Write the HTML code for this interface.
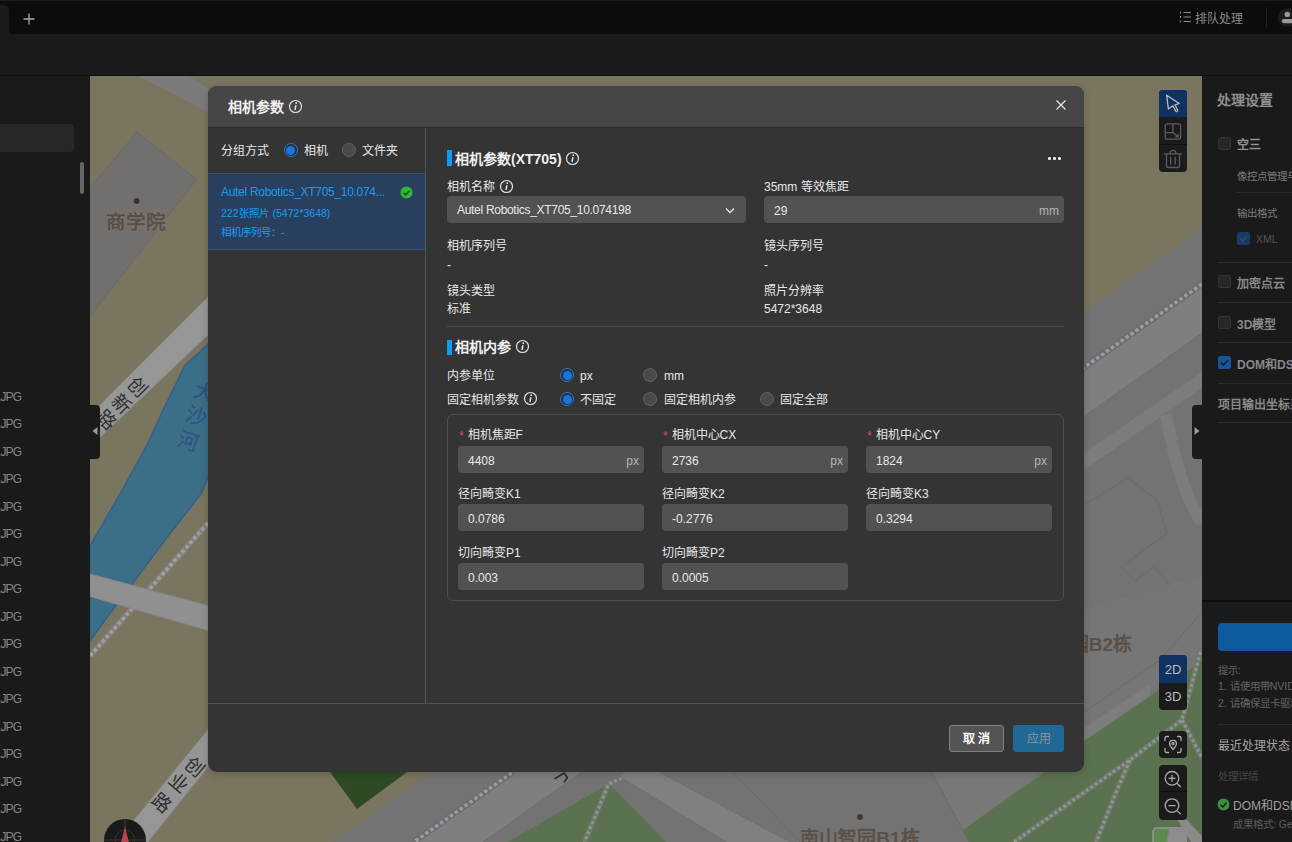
<!DOCTYPE html>
<html lang="zh-CN">
<head>
<meta charset="utf-8">
<title>相机参数</title>
<style>
*{box-sizing:border-box;margin:0;padding:0}
html,body{width:1292px;height:842px;overflow:hidden;background:#1a1a1a}
body{font-family:"Liberation Sans",sans-serif;font-size:12px;color:#e6e6e6;position:relative}
.abs{position:absolute}
.t{position:absolute;white-space:nowrap;line-height:16px;height:16px}
/* top bars */
#topbar{left:0;top:0;width:1292px;height:34px;background:#0c0c0c;border-top:1px solid #1d1d1d}
#tab{left:0;top:5px;width:9px;height:29px;background:#1a1a1a;border-radius:0 5px 0 0}
#bar2{left:0;top:34px;width:1292px;height:42px;background:#1a1a1a;border-bottom:1px solid #0e0e0e}
/* side panels */
#left{left:0;top:76px;width:90px;height:766px;background:#1a1a1a}
#right{left:1202px;top:76px;width:90px;height:766px;background:#1a1a1a}
#map{left:90px;top:76px;width:1112px;height:766px;background:#7a755f;overflow:hidden}
.jpg{left:-2px;color:#858585;font-size:12px;letter-spacing:-0.9px}
.handle{background:#1a1a1a;width:10px;height:54px;top:405px}
/* map tools */
.tool{left:1159px;width:28px;background:#1b1b1b}
.rdiv{position:absolute;height:1px;background:#2b2b2b;right:0}
.cb{position:absolute;width:13px;height:13px;border-radius:2px;background:#272727;border:1px solid #333}
.rl{color:#888;font-weight:bold}
</style>
</head>
<body>
<div id="topbar" class="abs"></div>
<div id="tab" class="abs"></div>
<div id="bar2" class="abs"></div>
<svg class="abs" style="left:22px;top:12px" width="14" height="14" viewBox="0 0 14 14"><path d="M7 1.5v11M1.5 7h11" stroke="#a8a8a8" stroke-width="1.3" fill="none"/></svg>
<!-- queue -->
<svg class="abs" style="left:1179px;top:10px" width="14" height="14" viewBox="0 0 14 14"><path d="M4.5 2.500h7.500M4.500 7h7.500M4.500 11.500h7.500" stroke="#8d8d8d" stroke-width="1.100"/><path d="M1.500 1.500v2M1.500 6v2M1.500 10.500v2" stroke="#8d8d8d" stroke-width="1"/></svg>
<div class="t" style="left:1195px;top:11px;color:#8d8d8d;font-size:12px">排队处理</div>
<div class="abs" style="left:1266px;top:7px;width:1px;height:20px;background:#202020"></div>
<div class="abs" style="left:1278px;top:8px;width:19px;height:19px;border-radius:50%;background:#1c1c1c"></div>
<svg class="abs" style="left:1281px;top:10px" width="14" height="14" viewBox="0 0 14 14"><circle cx="6.3" cy="4.4" r="2.7" fill="#9a9a9a"/><rect x="0.7" y="9" width="11.2" height="4.2" rx="2.1" fill="#9a9a9a"/></svg>

<div id="map" class="abs">
<svg width="1112" height="766" viewBox="90 76 1112 766" style="position:absolute;left:0;top:0">

  <rect x="90" y="76" width="1112" height="766" fill="#7a755f"/>
  <!-- big gray area -->
  <polygon points="1202,229 332,842 1202,842" fill="#737373"/>
  <!-- lighter road band with dotted rail -->
  <polygon points="1202,284 414,842 483,842 1202,333" fill="#7f7f7f"/>
  <line x1="1202" y1="333" x2="483" y2="842" stroke="#6e6e78" stroke-width="1"/>
  <line x1="1202" y1="284" x2="414" y2="842" stroke="#6c6c74" stroke-width="6"/>
  <line x1="1202" y1="284" x2="414" y2="842" stroke="#9c9c9c" stroke-width="3.500" stroke-dasharray="3.500 2.500"/>
  <!-- secondary roads right strip -->
  <polygon points="1202,372 1084,453 1084,470 1202,388" fill="#7c7c7c"/>
  <path d="M1166 414 C1172 450 1185 500 1202 522" stroke="#7c7c7c" stroke-width="12" fill="none"/>
  <path d="M1084 505 L1128 478 L1157 500 L1167 533 L1121 567 L1135 581 L1154 567 L1202 622" stroke="#6a6a6a" stroke-width="1" fill="none"/>
  <!-- lighter gray block near B2 -->
  <polygon points="1084,610 1202,575 1202,661 1084,741" fill="#767676"/>
  <polygon points="1150,684 1084,728 1084,741 1150,696" fill="#7d7d7d"/>
  <path d="M1084 712 L1160 660 L1202 612" stroke="#6c6c6c" stroke-width="1" fill="none"/>
  <!-- green bottom right -->
  <polygon points="932,772 1084,741 963,830" fill="#787876"/>
  <polygon points="1202,661 1084,741 1044,773 963,830 968.500,842 1202,842" fill="#5b7250"/>
  <!-- green triangle bottom middle -->
  <polygon points="609,783.500 508,842 666,842" fill="#5b7250"/>
  <path d="M622 778 L608.500 784 L584.500 842" stroke="#6b7769" stroke-width="5.500" fill="none"/>
  <path d="M622 778 L608.500 784 L584.500 842" stroke="#8f948e" stroke-width="3.200" stroke-dasharray="3 2.500" fill="none"/>
  <!-- bottom diagonal light road -->
  <polygon points="619,776 626,772 659,772 790,842 726,842" fill="#808080"/>
  <path d="M619 776 L726 842 M659 772 L790 842" stroke="#6e6e78" stroke-width="1" fill="none"/>
  <!-- B1 building outline -->
  <path d="M733 772 L800 842 M932 772 L969 842" stroke="#6a6a6a" stroke-width="1" fill="none"/>
  <!-- dotted paths on green -->
  <path d="M1200.500 652 L1182 720 L1130 760 L1014 842 M1130 760 L1117.500 789 L1096 842 M1182 720 L1202 758" stroke="#6b7769" stroke-width="5.500" fill="none"/>
  <path d="M1200.500 652 L1182 720 L1130 760 L1014 842 M1130 760 L1117.500 789 L1096 842 M1182 720 L1202 758" stroke="#8f948e" stroke-width="3.200" stroke-dasharray="3 2.500" fill="none"/>
  <polygon points="1177,819 1186,819 1202,836 1202,842 1191,842" fill="#8a8a8a"/>
  <path d="M555 778.500 L564.300 773 L567.500 778 L564.300 781.700" stroke="#2c2c2c" stroke-width="1.600" fill="none" stroke-linecap="round" stroke-linejoin="round"/>
  <!-- imagery triangle -->
  <polygon points="330,772 407,772 357,809" fill="#2e4a25"/>
  <!-- top-left road -->
  <polygon points="138,76 189,76 208,88 208,112" fill="#7b7b7b"/>
  <!-- building -->
  <polygon points="137,132 196.500,179.500 91,315 90,315 90,188" fill="#71706f" stroke="#6a6968" stroke-width="1"/>
  <circle cx="136.600" cy="201" r="4" fill="#787674"/>
  <circle cx="136.600" cy="201" r="3" fill="#3e322c"/>
  <text x="136" y="229" font-size="19.500" fill="#5a4e46" stroke="#787674" stroke-width="2" paint-order="stroke" text-anchor="middle" font-weight="bold">商学院</text>
  <!-- river -->
  <polygon points="210,342.500 184.700,365.700 176.400,383 163,410 148,443 120,494 90,546 90,641 115,606.500 131.500,585 165,540 201,494 210,473" fill="#3b6f87" stroke="#33608c" stroke-width="1.500"/>
<text x="0" y="0" font-size="21" fill="#2b5185" text-anchor="middle" dominant-baseline="central" transform="translate(204.7,392) rotate(18)">大</text>
<text x="0" y="0" font-size="21" fill="#2b5185" text-anchor="middle" dominant-baseline="central" transform="translate(196,416.5) rotate(18)">沙</text>
<text x="0" y="0" font-size="21" fill="#2b5185" text-anchor="middle" dominant-baseline="central" transform="translate(188,441.5) rotate(18)">河</text>

  <!-- chuangxin road -->
  <polygon points="208,297 90,415 90,447 208,335" fill="#969696" stroke="#858585" stroke-width="1"/>
<text x="0" y="0" font-size="19" fill="#303030" text-anchor="middle" dominant-baseline="central" transform="translate(137.4,387.3) rotate(45)">创</text>
<text x="0" y="0" font-size="19" fill="#303030" text-anchor="middle" dominant-baseline="central" transform="translate(121.5,404) rotate(45)">新</text>
<text x="0" y="0" font-size="19" fill="#303030" text-anchor="middle" dominant-baseline="central" transform="translate(106.6,420.6) rotate(45)">路</text>

  <!-- rail dotted -->
  <line x1="208" y1="523" x2="90" y2="656" stroke="#807f7c" stroke-width="6"/>
  <line x1="208" y1="523" x2="90" y2="656" stroke="#a0a09e" stroke-width="3.500" stroke-dasharray="3.500 2.500"/>
  <!-- bridge road -->
  <polygon points="90,574 208,605.500 208,630.500 90,596.500" fill="#909090" stroke="#858585" stroke-width="1"/>
  <!-- chuangye road -->
  <polygon points="208,729.500 116,842 148,842 208,767" fill="#969696" stroke="#858585" stroke-width="1"/>
<text x="0" y="0" font-size="19" fill="#303030" text-anchor="middle" dominant-baseline="central" transform="translate(194,767) rotate(40)">创</text>
<text x="0" y="0" font-size="19" fill="#303030" text-anchor="middle" dominant-baseline="central" transform="translate(178,783.5) rotate(40)">业</text>
<text x="0" y="0" font-size="19" fill="#303030" text-anchor="middle" dominant-baseline="central" transform="translate(161.5,803.5) rotate(40)">路</text>
  <!-- labels -->
  <circle cx="860" cy="817" r="3" fill="#4a382e"/>
  <text x="860" y="845" font-size="19" fill="#5c5046" text-anchor="middle" font-weight="bold">南山智园B1栋</text>
  <text x="1132" y="651" font-size="19" fill="#5c5046" text-anchor="end" font-weight="bold">南山智园B2栋</text>
  <!-- compass -->
  <circle cx="125" cy="840" r="21" fill="#1a1a1a"/>
  <path d="M104 840H146M125 819V842" stroke="#3a3a3a" stroke-width="1"/>
  <circle cx="125" cy="840" r="10" fill="none" stroke="#333" stroke-width="1"/>
  <path d="M125 826.500 L121.200 842 L128.800 842 Z" fill="#b8444c"/>

</svg>
</div>

<div id="left" class="abs"></div>
<div class="abs" style="left:0;top:124px;width:74px;height:28px;background:#282828;border-radius:0 4px 4px 0"></div>
<div class="abs" style="left:80px;top:162px;width:4px;height:32px;background:#666;border-radius:2px"></div>
<div class="t jpg" style="top:389px">.JPG</div>
<div class="t jpg" style="top:416px">.JPG</div>
<div class="t jpg" style="top:444px">.JPG</div>
<div class="t jpg" style="top:471px">.JPG</div>
<div class="t jpg" style="top:499px">.JPG</div>
<div class="t jpg" style="top:526px">.JPG</div>
<div class="t jpg" style="top:554px">.JPG</div>
<div class="t jpg" style="top:581px">.JPG</div>
<div class="t jpg" style="top:609px">.JPG</div>
<div class="t jpg" style="top:636px">.JPG</div>
<div class="t jpg" style="top:664px">.JPG</div>
<div class="t jpg" style="top:691px">.JPG</div>
<div class="t jpg" style="top:719px">.JPG</div>
<div class="t jpg" style="top:746px">.JPG</div>
<div class="t jpg" style="top:774px">.JPG</div>
<div class="t jpg" style="top:801px">.JPG</div>
<div class="t jpg" style="top:829px">.JPG</div>

<div class="abs handle" style="left:90px;border-radius:0 4px 4px 0"></div>
<svg class="abs" style="left:91px;top:426px" width="8" height="10"><path d="M6.5 1v8L1.5 5z" fill="#9a9a9a"/></svg>

<div id="right" class="abs"></div>
<div class="abs handle" style="left:1192px;border-radius:4px 0 0 4px"></div>
<svg class="abs" style="left:1193px;top:426px" width="8" height="10"><path d="M1.5 1v8L6.5 5z" fill="#9a9a9a"/></svg>

<div class="t" style="left:1217px;top:92px;font-size:14px;color:#8e8e8e;font-weight:bold">处理设置</div>
<div class="cb" style="left:1218px;top:137px"></div>
<div class="t rl" style="left:1237px;top:137px;color:#929292">空三</div>
<div class="t" style="left:1237px;top:167.500px;color:#7e7e7e;font-size:10.500px">像控点管理与刺点</div>
<div class="rdiv" style="left:1237px;top:192px"></div>
<div class="t" style="left:1237px;top:205px;color:#7e7e7e;font-size:10.500px">输出格式</div>
<div class="cb" style="left:1237px;top:232px;background:#173a66;border-color:#173a66"></div>
<svg class="abs" style="left:1237px;top:232px" width="13" height="13"><path d="M3 6.5l2.5 2.5L10 4.2" stroke="#3a4a5e" stroke-width="1.4" fill="none"/></svg>
<div class="t" style="left:1256px;top:230.500px;color:#555;font-size:10.500px">XML</div>
<div class="rdiv" style="left:1218px;top:262px"></div>
<div class="cb" style="left:1218px;top:275px"></div>
<div class="t rl" style="left:1237px;top:276px">加密点云</div>
<div class="rdiv" style="left:1218px;top:302px"></div>
<div class="cb" style="left:1218px;top:316px"></div>
<div class="t rl" style="left:1237px;top:316.500px">3D模型</div>
<div class="rdiv" style="left:1218px;top:342px"></div>
<div class="cb" style="left:1218px;top:356px;background:#15559e;border-color:#15559e"></div>
<svg class="abs" style="left:1218px;top:356px" width="13" height="13"><path d="M3 6.5l2.5 2.5L10 4.2" stroke="#1a1a1a" stroke-width="1.5" fill="none"/></svg>
<div class="t rl" style="left:1237px;top:356.500px">DOM和DSM</div>
<div class="rdiv" style="left:1218px;top:383px"></div>
<div class="t rl" style="left:1218px;top:396.500px">项目输出坐标系</div>
<div class="rdiv" style="left:1218px;top:422px"></div>
<div class="abs" style="left:1202px;top:600px;width:90px;height:2px;background:#0c0c0c"></div>
<div class="abs" style="left:1218px;top:623px;width:80px;height:28px;background:#0d5a9e;border-radius:4px"></div>
<div class="t" style="left:1218px;top:662px;color:#646464;font-size:10.500px">提示:</div>
<div class="t" style="left:1218px;top:678px;color:#646464;font-size:10.500px">1. 请使用带NVIDIA显卡</div>
<div class="t" style="left:1218px;top:695px;color:#646464;font-size:10.500px">2. 请确保显卡驱动程序</div>
<div class="rdiv" style="left:1218px;top:724px"></div>
<div class="t" style="left:1218px;top:738px;color:#a6a6a6;">最近处理状态</div>
<div class="t" style="left:1218px;top:768px;color:#474747;font-size:10.500px">处理详情</div>
<svg class="abs" style="left:1217px;top:797.500px" width="13" height="13"><circle cx="6.5" cy="6.5" r="6" fill="#3a8f3e"/><path d="M3.5 6.7l2.2 2.2 3.8-4.2" stroke="#1a1a1a" stroke-width="1.4" fill="none"/></svg>
<div class="t" style="left:1233px;top:798px;color:#a0a0a0">DOM和DSM</div>
<div class="t" style="left:1233px;top:815.500px;color:#5c5c5c;font-size:10.500px">成果格式: GeoTIFF</div>


<div class="abs tool" style="top:90px;height:82px;border-radius:4px"></div>
<div class="abs tool" style="top:90px;height:27px;border-radius:4px 4px 0 0;background:#0f3262"></div>
<div class="abs" style="left:1159px;top:144px;width:28px;height:1px;background:#101010"></div>
<svg class="abs" style="left:1159px;top:90px" width="28" height="82" viewBox="0 0 28 82">
 <path d="M7.600 5.200 L9.400 19 L13.800 15.800 L17.100 21.800 L18.900 20.800 L16 14.800 L20.300 13.500 Z" fill="none" stroke="#bcbcbc" stroke-width="1.300" stroke-linejoin="round"/>
 <g stroke="#5c5c5c" stroke-width="1.300" fill="none"><rect x="6.200" y="33.800" width="15.400" height="15.400" rx="2"/><path d="M6.200 42.600h7.700M13.900 33.800v8.800l5 4M19.200 44v2.800h-2.800"/></g>
 <g stroke="#5c5c5c" stroke-width="1.300" fill="none"><path d="M4.500 63.800h19M7.500 63.800v11.700a2 2 0 0 0 2 2h9a2 2 0 0 0 2-2V63.800M11 63.800a3 3.400 0 0 1 6 0M11.700 66.800v7.600M16.200 66.800v7.600"/></g>
</svg>
<div class="abs tool" style="top:655px;height:55px;border-radius:4px"></div>
<div class="abs tool" style="top:655px;height:28px;border-radius:4px 4px 0 0;background:#0f3262"></div>
<div class="t" style="left:1159px;width:28px;text-align:center;top:661.500px;font-size:13px;color:#bcbcbc">2D</div>
<div class="t" style="left:1159px;width:28px;text-align:center;top:689px;font-size:13px;color:#bcbcbc">3D</div>
<div class="abs tool" style="top:731px;height:27px;border-radius:4px"></div>
<div class="abs tool" style="top:765px;height:55px;border-radius:4px"></div>
<div class="abs" style="left:1159px;top:791px;width:28px;height:1px;background:#101010"></div>
<svg class="abs" style="left:1159px;top:731px" width="28" height="90" viewBox="0 0 28 90">
 <g stroke="#adadad" stroke-width="1.3" fill="none">
 <path d="M6 10V7a1.500 1.500 0 0 1 1.500-1.500H10M18 5.500h2.500A1.500 1.500 0 0 1 22 7v3M22 17v3a1.500 1.500 0 0 1-1.500 1.500H18M10 21.500H7.500A1.500 1.500 0 0 1 6 20v-3"/>
 <path d="M14 18.500c-2.200-2.600-3.400-4.200-3.400-5.800a3.400 3.400 0 0 1 6.800 0c0 1.600-1.200 3.200-3.400 5.800z"/><circle cx="14" cy="12.600" r="1"/>
 <circle cx="13" cy="47.300" r="6.800"/><path d="M18 52.300l3.700 3.700M9.500 47.300h7M13 43.800v7"/>
 <circle cx="13" cy="74.600" r="6.800"/><path d="M18 79.600l3.700 3.700M9.500 74.600h7"/>
 </g>
</svg>
<div class="abs" style="left:1152px;top:827px;width:35px;height:22px;border:2px solid #8c8c8c;border-radius:5px;background:linear-gradient(100deg,#5c8a4e 0,#5c8a4e 40%,#8c8c8c 48%,#8c8c8c 100%)"></div>

<div class="abs" id="modal" style="left:208px;top:86px;width:876px;height:686px;background:#343434;border-radius:9px;box-shadow:0 2px 8px rgba(0,0,0,.18)">
<div class="abs" style="left:0px;top:0px;width:876px;height:41px;background:#464646;border-radius:9px 9px 0 0"></div>
<div class="abs" style="left:0px;top:41px;width:876px;height:1px;background:#2c2c2c"></div>
<div class="t" style="left:20px;top:13px;font-size:14px;color:#f0f0f0;font-weight:bold;">相机参数</div>
<svg class="abs" style="left:79.5px;top:13px" width="15" height="15" viewBox="0 0 15 15"><circle cx="7.500" cy="7.500" r="6" fill="none" stroke="#e0e0e0" stroke-width="1.200"/><path d="M7.900 6.200L7 11" stroke="#e0e0e0" stroke-width="1.500" fill="none"/><circle cx="8.200" cy="4.200" r="0.900" fill="#e0e0e0"/></svg>
<svg class="abs" style="left:847px;top:13px" width="12" height="12"><path d="M1.500 1.500l9 9M10.500 1.500l-9 9" stroke="#e6e6e6" stroke-width="1.300"/></svg>
<div class="abs" style="left:217px;top:42px;width:1px;height:575px;background:#585858"></div>
<div class="t" style="left:13px;top:56.5px;font-size:12px;color:#e8e8e8;">分组方式</div>
<div class="abs" style="left:75.5px;top:57px;width:14px;height:14px;border-radius:50%;border:1.200px solid #2277dc;background:#2b2f37"></div>
<div class="abs" style="left:78px;top:59.5px;width:9px;height:9px;border-radius:50%;background:#1c74d8"></div>
<div class="t" style="left:96px;top:56.5px;font-size:12px;color:#e8e8e8;">相机</div>
<div class="abs" style="left:134px;top:57px;width:14px;height:14px;border-radius:50%;border:1px solid #626262;background:#4a4a4a"></div>
<div class="t" style="left:154px;top:56.5px;font-size:12px;color:#e8e8e8;">文件夹</div>
<div class="abs" style="left:0px;top:87px;width:217px;height:77px;background:#28405e;border-top:1px solid #35516f;border-bottom:1px solid #35516f"></div>
<div class="t" style="left:13px;top:98px;font-size:12px;color:#1a9bf0;letter-spacing:-0.3px">Autel Robotics_XT705_10.074...</div>
<div class="t" style="left:13px;top:118.5px;font-size:10.500px;color:#1a9bf0;">222张照片<span style="margin-left:4px">(</span>5472*3648)</div>
<div class="t" style="left:13px;top:138px;font-size:10.500px;color:#1a9bf0;">相机序列号：-</div>
<svg class="abs" style="left:192px;top:100px" width="13" height="13"><circle cx="6.500" cy="6.500" r="6" fill="#2dbb2d"/><path d="M3.600 6.700l2.100 2.100 3.700-4" stroke="#1c4f24" stroke-width="1.600" fill="none"/></svg>
<div class="abs" style="left:0px;top:617px;width:876px;height:1px;background:#505050"></div>
<div class="abs" style="left:741px;top:639px;width:55px;height:27px;background:#545454;border:1px solid #808080;border-radius:3px"></div>
<div class="t" style="left:741px;top:644.5px;width:55px;text-align:center;font-size:12px;font-weight:bold;color:#fff">取 消</div>
<div class="abs" style="left:805px;top:639px;width:51px;height:27px;background:#206997;border-radius:3px"></div>
<div class="t" style="left:805px;top:644.5px;width:51px;text-align:center;font-size:12px;color:#8a9299">应用</div>
<div class="abs" style="left:239px;top:64px;width:5px;height:16px;background:#0d9cf5"></div>
<div class="t" style="left:247px;top:64.5px;font-size:14px;color:#f0f0f0;font-weight:bold;">相机参数(XT705)</div>
<svg class="abs" style="left:356.5px;top:64.5px" width="15" height="15" viewBox="0 0 15 15"><circle cx="7.500" cy="7.500" r="6" fill="none" stroke="#e0e0e0" stroke-width="1.200"/><path d="M7.900 6.200L7 11" stroke="#e0e0e0" stroke-width="1.500" fill="none"/><circle cx="8.200" cy="4.200" r="0.900" fill="#e0e0e0"/></svg>
<div class="abs" style="left:840px;top:71px;width:2.5px;height:2.5px;background:#f0f0f0;border-radius:50%"></div>
<div class="abs" style="left:845px;top:71px;width:2.5px;height:2.5px;background:#f0f0f0;border-radius:50%"></div>
<div class="abs" style="left:850px;top:71px;width:2.5px;height:2.5px;background:#f0f0f0;border-radius:50%"></div>
<div class="t" style="left:239px;top:93px;font-size:12px;color:#e8e8e8;">相机名称</div>
<svg class="abs" style="left:290.5px;top:93px" width="15" height="15" viewBox="0 0 15 15"><circle cx="7.500" cy="7.500" r="6" fill="none" stroke="#e0e0e0" stroke-width="1.200"/><path d="M7.900 6.200L7 11" stroke="#e0e0e0" stroke-width="1.500" fill="none"/><circle cx="8.200" cy="4.200" r="0.900" fill="#e0e0e0"/></svg>
<div class="t" style="left:556px;top:93px;font-size:12px;color:#e8e8e8;">35mm 等效焦距</div>
<div class="abs" style="left:239px;top:110px;width:299px;height:27px;background:#525252;border-radius:4px"></div>
<div class="t" style="left:249px;top:116px;font-size:12px;color:#e8e8e8;letter-spacing:-0.3px">Autel Robotics_XT705_10.074198</div>
<svg class="abs" style="left:517px;top:121px" width="10" height="7"><path d="M1 1.500l4 4 4-4" stroke="#e6e6e6" stroke-width="1.300" fill="none"/></svg>
<div class="abs" style="left:556px;top:110px;width:300px;height:27px;background:#525252;border-radius:4px"></div>
<div class="t" style="left:566px;top:117px;font-size:12px;color:#e8e8e8;">29</div>
<div class="t" style="left:556px;top:117px;width:295px;text-align:right;color:#b4b4b4">mm</div>
<div class="t" style="left:239px;top:152px;font-size:12px;color:#e8e8e8;">相机序列号</div>
<div class="t" style="left:556px;top:152px;font-size:12px;color:#e8e8e8;">镜头序列号</div>
<div class="t" style="left:239px;top:171px;font-size:12px;color:#e8e8e8;">-</div>
<div class="t" style="left:556px;top:171px;font-size:12px;color:#e8e8e8;">-</div>
<div class="t" style="left:239px;top:196.5px;font-size:12px;color:#e8e8e8;">镜头类型</div>
<div class="t" style="left:556px;top:196.5px;font-size:12px;color:#e8e8e8;">照片分辨率</div>
<div class="t" style="left:239px;top:214.5px;font-size:12px;color:#e8e8e8;">标准</div>
<div class="t" style="left:556px;top:214.5px;font-size:12px;color:#e8e8e8;">5472*3648</div>
<div class="abs" style="left:239px;top:240px;width:617px;height:1px;background:#4c4c4c"></div>
<div class="abs" style="left:239px;top:253.500px;width:5px;height:15.500px;background:#0d9cf5"></div>
<div class="t" style="left:247px;top:253px;font-size:14px;color:#f0f0f0;font-weight:bold;">相机内参</div>
<svg class="abs" style="left:306.5px;top:253px" width="15" height="15" viewBox="0 0 15 15"><circle cx="7.500" cy="7.500" r="6" fill="none" stroke="#e0e0e0" stroke-width="1.200"/><path d="M7.900 6.200L7 11" stroke="#e0e0e0" stroke-width="1.500" fill="none"/><circle cx="8.200" cy="4.200" r="0.900" fill="#e0e0e0"/></svg>
<div class="t" style="left:239px;top:282px;font-size:12px;color:#e8e8e8;">内参单位</div>
<div class="abs" style="left:352px;top:282px;width:14px;height:14px;border-radius:50%;border:1.200px solid #2277dc;background:#2b2f37"></div>
<div class="abs" style="left:354.5px;top:284.5px;width:9px;height:9px;border-radius:50%;background:#1c74d8"></div>
<div class="t" style="left:372px;top:281.5px;font-size:12px;color:#e8e8e8;">px</div>
<div class="abs" style="left:435px;top:282px;width:14px;height:14px;border-radius:50%;border:1px solid #626262;background:#4a4a4a"></div>
<div class="t" style="left:456px;top:281.5px;font-size:12px;color:#e8e8e8;">mm</div>
<div class="t" style="left:239px;top:306px;font-size:12px;color:#e8e8e8;">固定相机参数</div>
<svg class="abs" style="left:315px;top:305px" width="15" height="15" viewBox="0 0 15 15"><circle cx="7.500" cy="7.500" r="6" fill="none" stroke="#e0e0e0" stroke-width="1.200"/><path d="M7.900 6.200L7 11" stroke="#e0e0e0" stroke-width="1.500" fill="none"/><circle cx="8.200" cy="4.200" r="0.900" fill="#e0e0e0"/></svg>
<div class="abs" style="left:352px;top:306px;width:14px;height:14px;border-radius:50%;border:1.200px solid #2277dc;background:#2b2f37"></div>
<div class="abs" style="left:354.5px;top:308.5px;width:9px;height:9px;border-radius:50%;background:#1c74d8"></div>
<div class="t" style="left:372px;top:305.5px;font-size:12px;color:#e8e8e8;">不固定</div>
<div class="abs" style="left:435px;top:306px;width:14px;height:14px;border-radius:50%;border:1px solid #626262;background:#4a4a4a"></div>
<div class="t" style="left:456px;top:305.5px;font-size:12px;color:#e8e8e8;">固定相机内参</div>
<div class="abs" style="left:552px;top:306px;width:14px;height:14px;border-radius:50%;border:1px solid #626262;background:#4a4a4a"></div>
<div class="t" style="left:572px;top:305.5px;font-size:12px;color:#e8e8e8;">固定全部</div>
<div class="abs" style="left:239px;top:328px;width:617px;height:187px;border:1px solid #4e4e4e;border-radius:6px"></div>
<div class="t" style="left:251px;top:342px;font-size:12px;color:#e0484d;">*</div>
<div class="t" style="left:259.5px;top:341px;font-size:12px;color:#e8e8e8;">相机焦距F</div>
<div class="abs" style="left:250px;top:360px;width:186px;height:27px;background:#525252;border-radius:4px"></div>
<div class="t" style="left:260px;top:367px;font-size:12px;color:#e8e8e8;">4408</div>
<div class="t" style="left:250px;top:367px;width:181px;text-align:right;color:#b4b4b4">px</div>
<div class="t" style="left:455px;top:342px;font-size:12px;color:#e0484d;">*</div>
<div class="t" style="left:463.5px;top:341px;font-size:12px;color:#e8e8e8;">相机中心CX</div>
<div class="abs" style="left:453.500px;top:360px;width:186.500px;height:27px;background:#525252;border-radius:4px"></div>
<div class="t" style="left:464px;top:367px;font-size:12px;color:#e8e8e8;">2736</div>
<div class="t" style="left:454px;top:367px;width:181px;text-align:right;color:#b4b4b4">px</div>
<div class="t" style="left:659px;top:342px;font-size:12px;color:#e0484d;">*</div>
<div class="t" style="left:667.5px;top:341px;font-size:12px;color:#e8e8e8;">相机中心CY</div>
<div class="abs" style="left:658px;top:360px;width:186px;height:27px;background:#525252;border-radius:4px"></div>
<div class="t" style="left:668px;top:367px;font-size:12px;color:#e8e8e8;">1824</div>
<div class="t" style="left:658px;top:367px;width:181px;text-align:right;color:#b4b4b4">px</div>
<div class="t" style="left:250px;top:400px;font-size:12px;color:#e8e8e8;">径向畸变K1</div>
<div class="abs" style="left:250px;top:418px;width:186px;height:27px;background:#525252;border-radius:4px"></div>
<div class="t" style="left:260px;top:425px;font-size:12px;color:#e8e8e8;">0.0786</div>
<div class="t" style="left:454px;top:400px;font-size:12px;color:#e8e8e8;">径向畸变K2</div>
<div class="abs" style="left:453.500px;top:418px;width:186.500px;height:27px;background:#525252;border-radius:4px"></div>
<div class="t" style="left:464px;top:425px;font-size:12px;color:#e8e8e8;">-0.2776</div>
<div class="t" style="left:658px;top:400px;font-size:12px;color:#e8e8e8;">径向畸变K3</div>
<div class="abs" style="left:658px;top:418px;width:186px;height:27px;background:#525252;border-radius:4px"></div>
<div class="t" style="left:668px;top:425px;font-size:12px;color:#e8e8e8;">0.3294</div>
<div class="t" style="left:250px;top:458.5px;font-size:12px;color:#e8e8e8;">切向畸变P1</div>
<div class="abs" style="left:250px;top:477px;width:186px;height:27px;background:#525252;border-radius:4px"></div>
<div class="t" style="left:260px;top:484px;font-size:12px;color:#e8e8e8;">0.003</div>
<div class="t" style="left:454px;top:458.5px;font-size:12px;color:#e8e8e8;">切向畸变P2</div>
<div class="abs" style="left:453.500px;top:477px;width:186.500px;height:27px;background:#525252;border-radius:4px"></div>
<div class="t" style="left:464px;top:484px;font-size:12px;color:#e8e8e8;">0.0005</div>
</div>
</body>
</html>
